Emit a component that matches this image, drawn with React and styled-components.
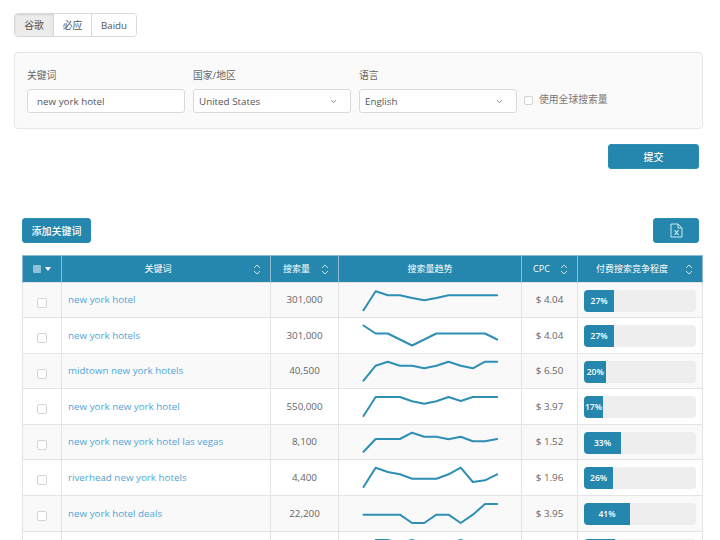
import React from 'react';
import styled, { createGlobalStyle } from 'styled-components';
import { ChevronDown } from 'lucide-react';

const GlobalStyle = createGlobalStyle`
  html, body {
    margin: 0;
    height: 540px;
    overflow: hidden;
    background: #fff;
    color: #555;
    font-family: "Open Sans", "Noto Sans CJK SC", sans-serif;
    font-size: 9.8px;
  }
`;

const Page = styled.div`
  position: relative;
  width: 720px;
  height: 540px;
  overflow: hidden;
`;

const EngineTabs = styled.div`
  position: absolute;
  left: 14px;
  top: 13px;
  display: flex;
  height: 24px;
  box-sizing: border-box;
  border: 1px solid #d9d9d9;
  border-radius: 4px;
  overflow: hidden;
`;

const EngineTab = styled.div`
  width: ${props => props.$width}px;
  box-sizing: border-box;
  display: flex;
  align-items: center;
  justify-content: center;
  background: ${props => (props.$active ? '#ececec' : '#fff')};
  box-shadow: ${props => (props.$active ? 'inset 0 1px 2px rgba(0, 0, 0, 0.12)' : 'none')};
  border-left: ${props => (props.$first ? 'none' : '1px solid #d9d9d9')};
`;

const SearchPanel = styled.div`
  position: absolute;
  left: 14px;
  top: 52px;
  width: 689px;
  height: 77px;
  box-sizing: border-box;
  background: #fafafa;
  border: 1px solid #e6e6e6;
  border-radius: 4px;
`;

const FieldLabel = styled.label`
  position: absolute;
  left: ${props => props.$left}px;
  top: 15.5px;
  line-height: 14px;
  color: #666;
`;

const FieldBox = styled.div`
  position: absolute;
  left: ${props => props.$left}px;
  top: 36px;
  width: 158px;
  height: 24px;
  box-sizing: border-box;
  display: flex;
  align-items: center;
  justify-content: space-between;
  padding: ${props => (props.$select ? '1px' : '0')} ${props => (props.$select ? '12px' : '9px')} 0 ${props => (props.$select ? '5px' : '9px')};
  background: #fff;
  border: 1px solid #d9d9d9;
  border-radius: 3px;
  color: #555;
`;

const GlobalCheck = styled.div`
  position: absolute;
  left: 509px;
  top: 40px;
  display: flex;
  align-items: center;
  gap: 6px;
  line-height: 14px;
  color: #777;
`;

const CheckBox = styled.span`
  display: block;
  width: 9px;
  height: 9px;
  box-sizing: border-box;
  background: #fff;
  border: 1px solid #d4d4d4;
  border-radius: 2px;
`;

const Button = styled.button`
  position: absolute;
  left: ${props => props.$left}px;
  top: ${props => props.$top}px;
  width: ${props => props.$width}px;
  height: 25px;
  padding: 0;
  display: flex;
  align-items: center;
  justify-content: center;
  background: #2587ad;
  border: 1px solid #2a8db5;
  border-radius: 3px;
  color: #fff;
  font-family: inherit;
  font-size: 10px;
  font-weight: 500;
`;

const Table = styled.table`
  position: absolute;
  left: 22px;
  top: 255px;
  width: 680px;
  table-layout: fixed;
  border-collapse: collapse;
`;

const HeadCell = styled.th`
  position: relative;
  height: 27px;
  padding: 0 ${props => (props.$sortable ? '16px' : '0')} 1px 0;
  box-sizing: border-box;
  background: #2587ad;
  border: 1px solid #8dbdd2;
  border-bottom: none;
  color: #fff;
  font-size: 9px;
  font-weight: 400;
  text-align: center;
`;

const SortMark = styled.svg`
  position: absolute;
  right: 9px;
  top: 8px;
  width: 8px;
  height: 11px;
`;

const SelectAll = styled.div`
  display: flex;
  align-items: center;
  justify-content: center;
  gap: 4px;
`;

const SelectBox = styled.span`
  width: 8px;
  height: 8px;
  background: #8fc1d6;
  border-radius: 1px;
`;

const Caret = styled.span`
  width: 0;
  height: 0;
  border-left: 3.5px solid transparent;
  border-right: 3.5px solid transparent;
  border-top: 4px solid #fff;
`;

const Row = styled.tr`
  height: ${props => props.$height}px;
  background: ${props => (props.$striped ? '#f9f9f9' : '#fff')};
`;

const Cell = styled.td`
  position: relative;
  padding: 0;
  box-sizing: border-box;
  border: 1px solid #e4e4e4;
  text-align: ${props => props.$align || 'center'};
  color: #666;
  line-height: 14px;
`;

const RowCheck = styled(CheckBox)`
  width: 10px;
  height: 10px;
  margin: 5px auto 0;
`;

const KeywordLink = styled.a`
  margin-left: 6px;
  color: #4fa5d8;
  text-decoration: none;
`;

const Spark = styled.svg`
  position: absolute;
  left: 0;
  top: 0;
  width: 182px;
  height: 36px;
  overflow: visible;
`;

const BarTrack = styled.div`
  position: absolute;
  left: 6px;
  top: 6.5px;
  width: 112px;
  height: 22.5px;
  background: #eee;
  border-radius: 4px;
  overflow: hidden;
`;

const BarFill = styled.div`
  height: 100%;
  display: flex;
  align-items: center;
  justify-content: center;
  background: #2587ad;
  color: #fff;
  font-size: 8.5px;
  font-weight: 600;
`;

const rows = [
  { keyword: 'new york hotel', volume: '301,000', cpc: '$ 4.04', competition: 27, height: 35, trend: [27.3, 8.3, 12.3, 12.3, 15, 17.3, 15, 12.3, 12.3, 12.3, 12.3, 12.3] },
  { keyword: 'new york hotels', volume: '301,000', cpc: '$ 4.04', competition: 27, height: 36, trend: [7.5, 15.5, 15.5, 21.5, 27.5, 21.5, 15.5, 15.5, 15.5, 15.5, 15.5, 21.5] },
  { keyword: 'midtown new york hotels', volume: '40,500', cpc: '$ 6.50', competition: 20, height: 35, trend: [26.7, 11.7, 7.7, 11.7, 11.7, 14.3, 11.7, 7.7, 11.7, 14.3, 7.7, 7.7] },
  { keyword: 'new york new york hotel', volume: '550,000', cpc: '$ 3.97', competition: 17, height: 36, trend: [27, 8, 8, 8, 12.3, 14.7, 12.3, 8, 12, 8, 8, 8] },
  { keyword: 'new york new york hotel las vegas', volume: '8,100', cpc: '$ 1.52', competition: 33, height: 35, trend: [26.7, 14, 14, 14, 7.7, 11.7, 11.7, 14.3, 11.7, 16.3, 16.3, 14] },
  { keyword: 'riverhead new york hotels', volume: '4,400', cpc: '$ 1.96', competition: 26, height: 36, trend: [27, 7.7, 12, 14.3, 18.7, 18.7, 18.7, 14.3, 7.7, 22, 20.3, 14.3] },
  { keyword: 'new york hotel deals', volume: '22,200', cpc: '$ 3.95', competition: 41, height: 36, trend: [18.7, 18.7, 18.7, 18.7, 27, 27, 18.7, 18.7, 27, 18.7, 8, 8] },
  { keyword: '', volume: '', cpc: '', competition: 28, height: 36, trend: [27, 8, 8, 11, 8, 12, 12, 12, 8, 12, 12, 12] },
];

const SortIcon = () => (
  <SortMark viewBox="0 0 8 11" fill="none" stroke="#cfe3ec" strokeWidth="1">
    <path d="M1 4l3-3 3 3M1 7l3 3 3-3" />
  </SortMark>
);

const ExcelIcon = () => (
  <svg width="13" height="15" viewBox="0 0 13 15" fill="none" stroke="#e4f0f5" strokeWidth="0.9">
    <path d="M1 1h7l4 4v9H1zM8 1v4h4" />
    <path d="M4.5 7l4 5M8.5 7l-4 5" strokeWidth="1.1" />
  </svg>
);

const TrendLine = ({ values }) => (
  <Spark viewBox="0 0 182 36">
    <polyline
      points={values.map((y, i) => `${24.5 + i * 12.15},${y}`).join(' ')}
      fill="none"
      stroke="#2e8fb5"
      strokeWidth="2"
      strokeLinecap="round"
      strokeLinejoin="round"
    />
  </Spark>
);

const App = () => (
  <Page>
    <GlobalStyle />
    <EngineTabs>
      <EngineTab $width={38} $active $first>谷歌</EngineTab>
      <EngineTab $width={38}>必应</EngineTab>
      <EngineTab $width={45}>Baidu</EngineTab>
    </EngineTabs>

    <SearchPanel>
      <FieldLabel $left={12}>关键词</FieldLabel>
      <FieldLabel $left={178}>国家/地区</FieldLabel>
      <FieldLabel $left={344}>语言</FieldLabel>
      <FieldBox $left={12}>new york hotel</FieldBox>
      <FieldBox $left={178} $select>
        United States
        <ChevronDown size={9} color="#666" />
      </FieldBox>
      <FieldBox $left={344} $select>
        English
        <ChevronDown size={9} color="#666" />
      </FieldBox>
      <GlobalCheck>
        <CheckBox />
        使用全球搜索量
      </GlobalCheck>
    </SearchPanel>

    <Button $left={608} $top={144} $width={91}>提交</Button>
    <Button $left={22} $top={218} $width={69}>添加关键词</Button>
    <Button $left={653} $top={218} $width={46}><ExcelIcon /></Button>

    <Table>
      <colgroup>
        <col style={{ width: 39 }} />
        <col style={{ width: 209 }} />
        <col style={{ width: 68 }} />
        <col style={{ width: 183 }} />
        <col style={{ width: 56 }} />
        <col style={{ width: 125 }} />
      </colgroup>
      <thead>
        <tr>
          <HeadCell>
            <SelectAll><SelectBox /><Caret /></SelectAll>
          </HeadCell>
          <HeadCell $sortable>关键词<SortIcon /></HeadCell>
          <HeadCell $sortable>搜索量<SortIcon /></HeadCell>
          <HeadCell>搜索量趋势</HeadCell>
          <HeadCell $sortable>CPC<SortIcon /></HeadCell>
          <HeadCell $sortable>付费搜索竞争程度<SortIcon /></HeadCell>
        </tr>
      </thead>
      <tbody>
        {rows.map((row, i) => (
          <Row key={i} $striped={i % 2 === 0} $height={row.height}>
            <Cell><RowCheck /></Cell>
            <Cell $align="left"><KeywordLink>{row.keyword}</KeywordLink></Cell>
            <Cell>{row.volume}</Cell>
            <Cell><TrendLine values={row.trend} /></Cell>
            <Cell>{row.cpc}</Cell>
            <Cell>
              <BarTrack>
                <BarFill style={{ width: `${row.competition}%` }}>
                  {row.keyword && `${row.competition}%`}
                </BarFill>
              </BarTrack>
            </Cell>
          </Row>
        ))}
      </tbody>
    </Table>
  </Page>
);

export default App;
